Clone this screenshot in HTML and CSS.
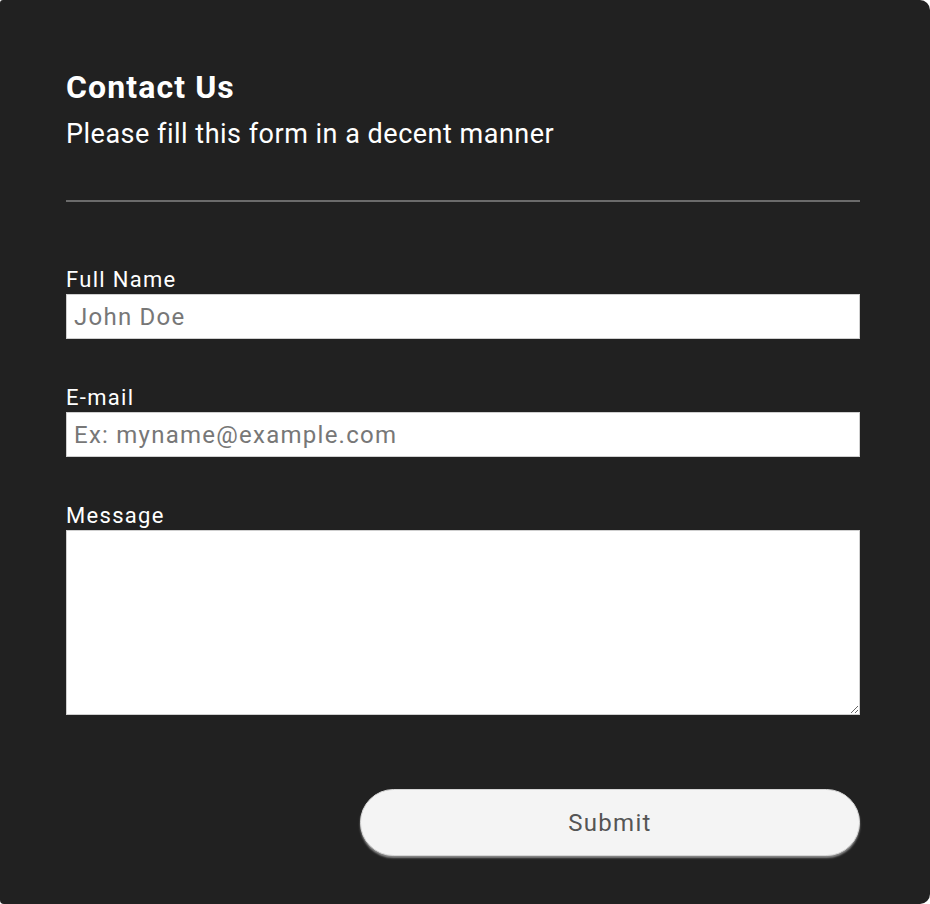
FILE: index.html
```html
<html lang="en">
<head>
<meta charset="UTF-8" />
<meta name="viewport" content="width=device-width, initial-scale=1" />
<title>Contact Us</title>
<link rel="stylesheet" href="styles.css">
</head>
<body>
  <main class="card">
    <header class="head">
      <h1 class="title">Contact Us</h1>
      <p class="sub">Please fill this form in a decent manner</p>
    </header>
    <hr class="rule">
    <form class="form">
      <div class="field">
        <label for="name">Full Name</label>
        <input id="name" type="text" placeholder="John Doe">
      </div>
      <div class="field">
        <label for="mail">E-mail</label>
        <input id="mail" type="email" placeholder="Ex: myname@example.com">
      </div>
      <div class="field">
        <label for="msg">Message</label>
        <textarea id="msg"></textarea>
      </div>
      <div class="actions">
        <button type="button" class="submit">Submit</button>
      </div>
    </form>
  </main>
</body>
</html>
```

FILE: styles.css
```css
*{box-sizing:border-box}
html,body{height:100%}
body{
  margin:0;
  background:#fff;
  font-family: Roboto, "Liberation Sans", Arial, sans-serif;
  color:#fff;
}

.card{
  height:100%;
  background:#212121;
  border-radius:3px 10px 10px 4px;
  padding:69px 70px 0 66px;
}

/* heading */
.title{
  margin:0;
  font-size:32px;
  line-height:36px;
  font-weight:700;
  letter-spacing:1.1px;
}
.sub{
  margin:13px 0 0;
  font-size:27px;
  line-height:32px;
  letter-spacing:.5px;
}
.rule{
  margin:50px 0 0;
  border:0;
  height:2px;
  background:#6b6b6b;
}

/* form */
.form{ margin-top:66px; display:flex; flex-direction:column; gap:47px; }
.field{ display:flex; flex-direction:column; gap:2px; }
.field label{ font-size:22px; line-height:24px; letter-spacing:1.3px; }
.field input,
.field textarea{
  width:100%;
  margin:0;
  border:1px solid #cfcfcf;
  background:#fff;
  font-family:inherit;
  font-size:24px;
  letter-spacing:1.25px;
  color:#333;
  padding:0 7px;
}
.field input{ height:45px; }
.field textarea{ height:185px; resize:vertical; }
.field input::placeholder{ color:#777; }

.actions{ display:flex; justify-content:flex-end; margin-top:27px; }
.submit{
  width:500px; height:67px;
  border:1px solid #d6d6d6;
  border-radius:34px;
  background:#f4f4f4;
  box-shadow:0 2px 2px #8a8a8a;
  font-family:inherit;
  font-size:24px;
  letter-spacing:1.3px;
  color:#555;
  cursor:pointer;
}
```
